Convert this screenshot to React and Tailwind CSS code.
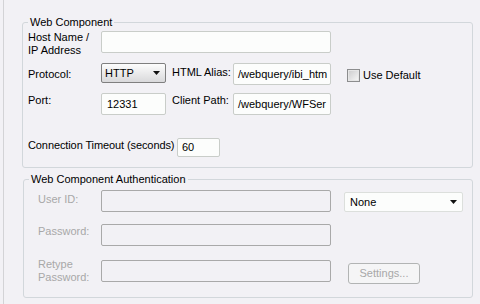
import React from 'react';

const Field = ({ w, h = 'h-[22px]', text, pl = 'pl-[5px]' }) => (
  <div
    className={`flex ${w} ${h} shrink-0 items-center rounded-[2px] border border-[#c9cdc9] bg-[#fcfdfc] ${pl} overflow-hidden whitespace-nowrap`}
  >
    {text}
  </div>
);

const Disabled = ({ w }) => (
  <div className={`${w} h-[22px] shrink-0 rounded-[2px] border border-[#a9a9a9] bg-[#f2f1f5]`} />
);

const Arrow = () => (
  <svg width="7" height="4" viewBox="0 0 7 4" className="shrink-0">
    <path d="M0 0h7L3.5 4z" fill="#111" />
  </svg>
);

const Group = ({ title, className, children }) => (
  <div className={`relative rounded-[3px] border border-[#d2d7db] ${className}`}>
    <span className="absolute -top-[7px] left-[5px] whitespace-nowrap bg-[#f2f1f5] px-[2px]">{title}</span>
    {children}
  </div>
);

export default function App() {
  return (
    <div className="h-[304px] w-[480px] overflow-hidden whitespace-nowrap bg-[#f2f1f5] font-['Liberation_Sans',Arial,sans-serif] text-[11px] leading-[13px] text-black">
      <div className="ml-[3px] h-full border-l border-[#d3d3d6] pl-[18px] pt-[22px]">
        {/* Web Component */}
        <Group title="Web Component" className="h-[146px] w-[451px] pl-[5px] pt-[8px]">
          <div className="flex h-[22px]">
            <div className="w-[73px]">
              Host Name /<br />IP Address
            </div>
            <Field w="w-[230px]" />
          </div>

          <div className="mt-[10px] flex h-[22px] items-start">
            <div className="w-[73px] pt-[5px]">Protocol:</div>
            <div className="flex h-[20px] w-[65px] items-center justify-between rounded-[2px] border border-[#7f7f7f] bg-gradient-to-b from-[#fdfdfd] to-[#d9d9db] pl-[3px] pr-[5px]">
              <span>HTTP</span>
              <Arrow />
            </div>
            <div className="ml-[6px] w-[61px] pt-[3px]">HTML Alias:</div>
            <Field w="w-[98px]" pl="pl-[4px]" text="/webquery/ibi_htm" />
            <div className="ml-[16px] mt-[6px] flex h-[13px] items-center">
              <div className="flex h-[13px] w-[13px] items-center justify-center border border-[#8c8d8e] bg-[#e6e6e6]">
                <div className="h-[9px] w-[9px] bg-gradient-to-br from-[#cfcfd0] to-[#f4f4f4]" />
              </div>
              <span className="ml-[3px]">Use Default</span>
            </div>
          </div>

          <div className="mt-[8px] flex h-[22px] items-start">
            <div className="w-[73px] pt-[1px]">Port:</div>
            <Field w="w-[65px]" text="12331" />
            <div className="ml-[6px] w-[61px] pt-[1px]">Client Path:</div>
            <Field w="w-[98px]" pl="pl-[4px]" text="/webquery/WFSer" />
          </div>

          <div className="mt-[23px] flex items-start">
            <div className="w-[149px] pt-[1px] tracking-[-0.1px]">Connection Timeout (seconds)</div>
            <Field w="w-[43px]" h="h-[19px]" pl="pl-[4px]" text="60" />
          </div>
        </Group>

        {/* Web Component Authentication */}
        <Group
          title="Web Component Authentication"
          className="ml-[1px] mt-[11px] h-[119px] w-[450px] pl-[14px] pt-[10px]"
        >
          <div className="flex h-[22px] items-start text-[#a8a8a8]">
            <div className="w-[63px] pt-[3px]">User ID:</div>
            <Disabled w="w-[230px]" />
            <div className="ml-[13px] mt-[2px] flex h-[20px] w-[119px] items-center justify-between rounded-[2px] border border-[#dcdfdc] bg-[#fcfdfc] pl-[5px] pr-[5px] text-black">
              <span>None</span>
              <Arrow />
            </div>
          </div>

          <div className="mt-[12px] flex h-[22px] items-start text-[#a8a8a8]">
            <div className="w-[63px] pt-[1px]">Password:</div>
            <Disabled w="w-[230px]" />
          </div>

          <div className="mt-[14px] flex h-[22px] items-start text-[#a8a8a8]">
            <div className="-mt-[2px] w-[63px]">
              Retype<br />Password:
            </div>
            <Disabled w="w-[230px]" />
            <div className="ml-[17px] mt-[3px] flex h-[21px] w-[72px] items-center justify-center rounded-[3px] border border-[#b2b4b4] bg-[#f5f5f6]">
              Settings...
            </div>
          </div>
        </Group>
      </div>
    </div>
  );
}
